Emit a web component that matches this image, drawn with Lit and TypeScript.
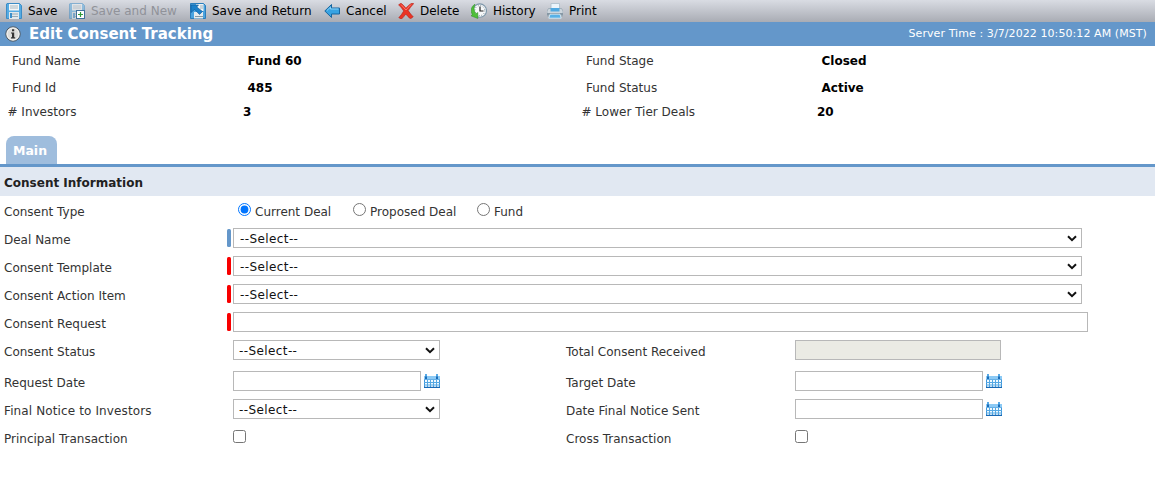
import {LitElement, html, css, svg, TemplateResult} from "lit";
import {customElement, property} from "lit/decorators.js";

const floppy = svg`<path d="M1 .5h12.500l2 2V15.500H.5V1z" fill="#55abe3" stroke="#3c8cc6"/><rect x="3" y="1" width="10" height="6.500" fill="#f4f7f8"/><path d="M4 3h8M4 5h8" stroke="#a9b8c0"/><rect x="3" y="9" width="10" height="7" fill="#e2e9ed"/><path d="M4 11h8M4 13.500h8" stroke="#9aabb5"/><rect x="4" y="10" width="2" height="5" fill="#3b8fca"/>`;

const icons: Record<string, TemplateResult> = {
  save: floppy,
  saveNew: svg`<g opacity=".5">${floppy}</g><rect x="7.500" y="7.500" width="8" height="8" fill="#fff" stroke="#3f719b"/><path d="M11.500 9v5M9 11.500h5" stroke="#2f9b3a" stroke-width="1.200"/>`,
  saveReturn: svg`<path d="M.5 .5h13l2 2v13H.5z" fill="#4aa3df" stroke="#2b7dbb"/><rect x="6" y="1" width="7.500" height="7" fill="#eef3f5"/><path d="M10 3h3M10 5h3" stroke="#9fb0ba"/><rect x="4" y="9" width="9" height="6.500" fill="#e4ebee"/><path d="M5 13.500h8" stroke="#8799a4"/><path d="M1 2h7.500L6.800 4 12.500 8.500 9.500 11.500 4.600 6.400 1 9.500z" fill="#1c80c9" stroke="#0f5898" stroke-width=".6"/>`,
  cancel: svg`<path d="M.8 8 7.500 1.500V5h8v6h-8v3.500z" fill="#38a3e2" stroke="#17659f" stroke-linejoin="round"/><path d="M3 7.500 6.500 4.100V6h8" fill="none" stroke="#8bd1f5"/>`,
  remove: svg`<path d="M.6 1.800 3 .3C4.800 1.500 6.500 3.500 8 5.300 9.500 3.200 11.500 1.200 14 .2l1.700.4C13.400 3 11.600 5.300 10.200 7.600c1.300 2 2.900 4.200 5 6.200l-2.700 2C10.600 14.500 9.200 12.800 7.800 11 6.500 12.800 5.200 14.500 3.500 16L.8 14.700C2.700 12.700 4.300 10.400 5.700 8 4.200 5.800 2.700 3.700.6 1.800z" fill="#ea3324" stroke="#b51d14" stroke-width=".6"/><path d="M3 1.500 8 7l5-5.500" fill="none" stroke="#ff8074" stroke-width=".9"/>`,
  history: svg`<circle cx="8.800" cy="7.600" r="6.700" fill="#f7f9fa" stroke="#7d97aa" stroke-width="1.100"/><circle cx="8.800" cy="7.600" r="5" fill="none" stroke="#5f7382" stroke-width="1" stroke-dasharray=".8 1.820"/><path d="M9 3.500V8h3.500" fill="none" stroke="#222" stroke-width="1.200"/><path d="M4 1.200C-.2 3.500-.6 8 1.300 11.500L0 12.800l6.800 2.700V9.500L5 10.700C2.800 8.200 2.500 4.500 4 1.200z" fill="#4fbf39" stroke="#268d22" stroke-width=".5"/>`,
  print: svg`<path d="M4 .5h8.500V7H4z" fill="#eaf4fb" stroke="#a9bdca" stroke-width=".8"/><path d="M1.500 5.500h13L16 8v5H0V8z" fill="#cdd6dd" stroke="#8fa0ac" stroke-width=".7"/><path d="M3.500 5h9v3.500h-9z" fill="#4ea8e0"/><path d="M0 10h16v2.500H0z" fill="#8798a5"/><path d="M3 11.200h10l1.200 4H1.800z" fill="#58b1e6" stroke="#e6f3fa" stroke-width=".8"/>`,
  info: svg`<circle cx="8" cy="8" r="7.200" fill="#dcdcda" stroke="#4d5963" stroke-width="1"/><circle cx="8" cy="8" r="6" fill="none" stroke="#f5f5f3"/><path d="M7 3.300h2.200v2H7zM6 6.400h3.200v4.800h1v1.300H6v-1.300h1V7.600H6z" fill="#333"/>`,
  calendar: svg`<path d="M0 3h16v12H0z" fill="#3f94d8"/><path d="M0 3h16v3.500H0z" fill="#8ccaf5"/><path d="M1 7h14v7H1z" fill="#f2faff"/><path d="M0 9.500h16M0 12h16M3.500 7v7M6.500 7v7M9.500 7v7M12.500 7v7" stroke="#55a8e3"/><path d="M0 14.400h16" stroke="#1768b4" stroke-width="1.200"/><path d="M1 1h2v5H1zM12 1h2v5h-2z" fill="#1b6cb8"/><path d="M1 1h2v2.500H1zM12 1h2v2.500h-2z" fill="#58aae6"/>`,
};

const icon = (name: string) => html`<svg class="icon" viewBox="0 0 16 16" width="16" height="16">${icons[name]}</svg>`;

@customElement("select-box")
class SelectBox extends LitElement {
  static styles = css`
    :host { display: grid; height: 20px; }
    select, svg { grid-area: 1 / 1; }
    select { appearance: none; box-sizing: border-box; width: 100%; height: 20px; margin: 0; padding: 1px 20px 0 var(--inset, 5px); border: 1px solid #b8b8b8; border-radius: 0; background: #fff; color: #111; font: 12px "DejaVu Sans", sans-serif; letter-spacing: .4px; }
    svg { justify-self: end; align-self: center; margin-right: 5px; pointer-events: none; }
  `;
  render() {
    return html`<select><option>--Select--</option></select>
      <svg width="10" height="7" viewBox="0 0 10 7"><path d="M1 1.200l4 3.900 4-3.900" fill="none" stroke="#111" stroke-width="2"/></svg>`;
  }
}

@customElement("form-row")
class FormRow extends LitElement {
  @property() label = "";
  @property() mark = "";
  static styles = css`
    :host { display: flex; align-items: center; height: 28px; }
    .label { flex: none; width: 223px; padding: 3px 0 0 4px; white-space: nowrap; }
    .investors { letter-spacing: .12px; }
    .mark { flex: none; width: 4px; height: 18px; margin-right: 2px; border-radius: 1.500px; }
    .blue { background: #6497ca; }
    .red { background: #f80000; }
  `;
  render() {
    return html`<span class="label ${this.label.endsWith("Investors") ? "investors" : ""}">${this.label}</span><span class="mark ${this.mark}"></span><slot></slot>`;
  }
}

@customElement("app-root")
class AppRoot extends LitElement {
  static styles = css`
    :host { display: block; height: 489px; overflow: hidden; background: #fff; color: #333; font: 12px/16px "DejaVu Sans", Verdana, sans-serif; }
    .toolbar { display: grid; grid-template-columns: 63px 121px 134px 74px 73px 76px 60px; align-items: center; height: 22px; padding-left: 6px; background: linear-gradient(#d9dce3, #a9acb4); color: #000; }
    .tool { display: flex; align-items: center; gap: 6px; height: 20px; white-space: nowrap; }
    .off { color: #909299; }
    .icon { flex: none; display: block; }
    .title { display: flex; align-items: center; height: 24px; padding: 0 8px 0 5px; background: #6497ca; color: #fff; }
    h1 { flex: 1; margin: 0 0 0 8px; font-size: 15px; }
    .time { font-size: 11px; letter-spacing: .08px; }
    .facts { display: grid; grid-template-columns: 235.500px 338.500px 235.500px 1fr; grid-template-rows: 27px 27px 21px; align-items: center; padding: 1px 0 0 12px; height: 89px; box-sizing: border-box; align-content: start; }
    .facts b { color: #000; }
    .out { margin-left: -4.500px; }
    .tabs { display: flex; align-items: end; height: 29px; padding-left: 6px; border-bottom: 3px solid #6497ca; }
    .tab { box-sizing: border-box; width: 51px; height: 28px; padding-left: 7px; line-height: 29px; border-radius: 8px 8px 0 0; background: #9fbddd; color: #fff; font-weight: bold; font-size: 12.500px; }
    h2 { margin: 0; height: 29px; padding-left: 4px; background: #e1e8f2; color: #222; font-size: 12px; line-height: 32px; }
    .choices { display: flex; }
    .choice { display: flex; align-items: start; gap: 4px; height: 14px; }
    .choice span { padding-top: 1px; }
    .choice input { margin: 0; }
    .first { width: 115px; margin-left: 5px; }
    .second { width: 124px; }
    .wide { width: 849px; --inset: 6px; }
    .narrow { width: 207px; }
    .text { box-sizing: border-box; height: 20px; margin: 0; padding: 0 4px; border: 1px solid #b8b8b8; background: #fff; }
    .full { width: 855px; }
    .date { width: 188px; margin-right: 3px; }
    .total { width: 206px; background: #ebebe4; }
    .check { margin: 0 0 2px; }
    .pair { display: grid; grid-template-columns: 562px 1fr; }
    .gap { margin-bottom: 3px; }
  `;

  tool(name: string, text: string, off = false) {
    return html`<div class="tool ${off ? "off" : ""}">${icon(name)}<span>${text}</span></div>`;
  }

  fact(label: string, value: string, out = false) {
    const cls = out ? "out" : "";
    return html`<span class=${cls}>${label}</span><b class=${cls}>${value}</b>`;
  }

  choice(text: string, cls: string, checked = false) {
    return html`<label class="choice ${cls}"><input type="radio" name="type" ?checked=${checked}><span>${text}</span></label>`;
  }

  render() {
    const date = html`<input class="text date">${icon("calendar")}`;
    return html`
      <div class="toolbar">
        ${this.tool("save", "Save")}${this.tool("saveNew", "Save and New", true)}${this.tool("saveReturn", "Save and Return")}
        ${this.tool("cancel", "Cancel")}${this.tool("remove", "Delete")}${this.tool("history", "History")}${this.tool("print", "Print")}
      </div>
      <div class="title">${icon("info")}<h1>Edit Consent Tracking</h1><span class="time">Server Time : 3/7/2022 10:50:12 AM (MST)</span></div>
      <div class="facts">
        ${this.fact("Fund Name", "Fund 60")}${this.fact("Fund Stage", "Closed")}
        ${this.fact("Fund Id", "485")}${this.fact("Fund Status", "Active")}
        ${this.fact("# Investors", "3", true)}${this.fact("# Lower Tier Deals", "20", true)}
      </div>
      <div class="tabs"><div class="tab">Main</div></div>
      <h2>Consent Information</h2>
      <form-row label="Consent Type"><div class="choices">${this.choice("Current Deal", "first", true)}${this.choice("Proposed Deal", "second")}${this.choice("Fund", "")}</div></form-row>
      <form-row label="Deal Name" mark="blue"><select-box class="wide"></select-box></form-row>
      <form-row label="Consent Template" mark="red"><select-box class="wide"></select-box></form-row>
      <form-row label="Consent Action Item" mark="red"><select-box class="wide"></select-box></form-row>
      <form-row label="Consent Request" mark="red"><input class="text full"></form-row>
      <div class="pair gap">
        <form-row label="Consent Status"><select-box class="narrow"></select-box></form-row>
        <form-row label="Total Consent Received"><input class="text total" disabled></form-row>
      </div>
      <div class="pair">
        <form-row label="Request Date">${date}</form-row>
        <form-row label="Target Date">${date}</form-row>
        <form-row label="Final Notice to Investors"><select-box class="narrow"></select-box></form-row>
        <form-row label="Date Final Notice Sent">${date}</form-row>
        <form-row label="Principal Transaction"><input class="check" type="checkbox"></form-row>
        <form-row label="Cross Transaction"><input class="check" type="checkbox"></form-row>
      </div>`;
  }
}
